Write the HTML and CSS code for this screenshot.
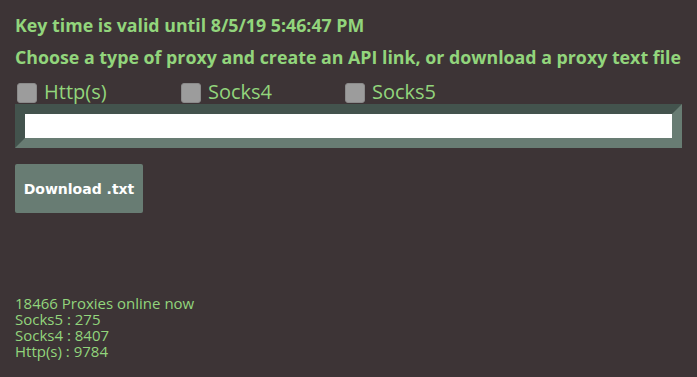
FILE: index.html
```html
<!DOCTYPE html>
<html>
<head>
<meta charset="utf-8">
<link rel="stylesheet" href="styles.css">
</head>
<body>
<div class="page">
  <h2 class="title">Key time is valid until 8/5/19 5:46:47 PM</h2>
  <h2 class="title second">Choose a type of proxy and create an API link, or download a proxy text file</h2>
  <div class="types">
    <label class="type"><span class="box"></span>Http(s)</label>
    <label class="type"><span class="box"></span>Socks4</label>
    <label class="type"><span class="box"></span>Socks5</label>
  </div>
  <div class="field"><div class="inner"></div></div>
  <button class="download">Download .txt</button>
  <div class="stats">
    <div>18466 Proxies online now</div>
    <div>Socks5 : 275</div>
    <div>Socks4 : 8407</div>
    <div>Http(s) : 9784</div>
  </div>
</div>
</body>
</html>
```
FILE: styles.css
```css
html, body {
  margin: 0;
  padding: 0;
  background: #3d3436;
  height: 100%;
}
.page {
  padding: 14px 15px 0 15px;
  font-family: "Open Sans", "Noto Sans", sans-serif;
  color: #92d57c;
}
.title {
  margin: 0;
  font-size: 17.8px;
  font-weight: 700;
  line-height: 22px;
  white-space: nowrap;
}
.second {
  margin-top: 10px;
}
.types {
  display: flex;
  margin-top: 12px;
  height: 24px;
  align-items: center;
}
.type {
  display: flex;
  align-items: center;
  width: 164px;
  font-size: 20px;
  line-height: 24px;
}
.box {
  width: 18px;
  height: 18px;
  margin: 1px 7px 0 2px;
  background: #9c9c9c;
  border: 1px solid #8a8a8a;
  border-radius: 3px;
}
.field {
  margin-top: 0;
  border-style: solid;
  border-width: 10px;
  border-color: #43534d #687c73 #687c73 #43534d;
  height: 24px;
  width: 647px;
}
.inner {
  background: #ffffff;
  height: 24px;
}
.download {
  display: block;
  margin-top: 16px;
  width: 128px;
  height: 49px;
  padding: 0;
  border: none;
  border-radius: 2px;
  background: #687c73;
  color: #ffffff;
  font-family: "DejaVu Sans", Verdana, sans-serif;
  font-weight: 700;
  font-size: 14px;
  text-align: center;
}
.stats {
  margin-top: 82px;
  font-size: 15px;
  line-height: 16px;
}
```
